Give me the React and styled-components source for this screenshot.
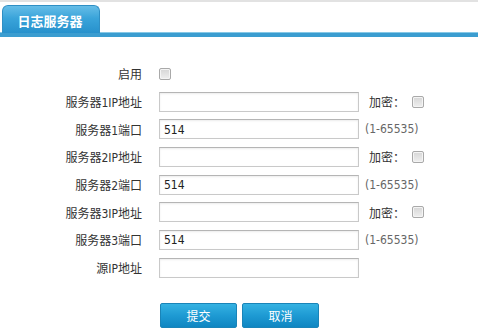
import React from 'react';
import styled, { createGlobalStyle } from 'styled-components';

const GlobalStyle = createGlobalStyle`
    body {
        margin: 0;
        background: #fff;
        font-family: "DejaVu Sans Condensed", "DejaVu Sans", "Noto Sans CJK SC", sans-serif;
        font-size: 12px;
        color: #333;
    }
`;

const Page = styled.div`
    width: 478px;
    height: 331px;
    overflow: hidden;
`;

const TabBar = styled.div`
    border-top: 2px solid #e2e2e2;
    height: 29px;
    padding: 2px 0 0 2px;
    display: flex;
    align-items: flex-end;
    border-bottom: 4px solid #3b9dd0;
    box-shadow: inset 0 -1px 0 #86c8e6;
`;

const Tab = styled.div`
    width: 98px;
    height: 28px;
    border-radius: 6px 6px 0 0;
    background: linear-gradient(to bottom, #66bde7 0%, #3aa4da 45%, #2791cc 100%);
    border: 1px solid #2f8fc4;
    border-bottom: none;
    box-sizing: border-box;
    color: #fff;
    font-family: "Noto Sans CJK SC", sans-serif;
    font-weight: bold;
    font-size: 13px;
    display: flex;
    align-items: center;
    justify-content: center;
    padding-top: 2px;
    padding-right: 2px;
`;

const Form = styled.div`
    display: grid;
    grid-template-columns: 142px 200px auto;
    grid-auto-rows: 27.7px;
    column-gap: 17px;
    padding-top: 23px;
    align-items: center;
`;

const Label = styled.div`
    text-align: right;
    white-space: nowrap;
    color: #333;
`;

const Field = styled.div`
    display: flex;
    align-items: center;
`;

const Input = styled.input`
    width: 200px;
    height: 20px;
    box-sizing: border-box;
    border: 1px solid #c9c9c9;
    border-top-color: #b5b5b5;
    box-shadow: inset 0 1px 2px rgba(0, 0, 0, 0.08);
    padding: 1px 4px 0;
    font-family: "DejaVu Sans Condensed", "DejaVu Sans", sans-serif;
    font-size: 12px;
    color: #222;
    outline: none;
`;

const Extra = styled.div`
    display: flex;
    align-items: center;
    gap: 7px;
    margin-left: ${p => p.$shift || 0}px;
    color: ${p => p.$muted ? '#666' : '#333'};
    white-space: nowrap;
`;

const Check = styled.span`
    display: inline-block;
    width: 12px;
    height: 12px;
    box-sizing: border-box;
    border: 1px solid #a9a9a9;
    border-radius: 2px;
    background: linear-gradient(to bottom, #d6d6d6, #efefef);
    box-shadow: inset 0 0 0 1px #f4f4f4;
`;

const Actions = styled.div`
    display: flex;
    gap: 5px;
    padding: 21px 0 0 160px;
`;

const Button = styled.button`
    width: 77px;
    height: 25px;
    border: 1px solid #1a84b8;
    border-radius: 2px;
    background: linear-gradient(to bottom, #35b2e2 0%, #1e9ad3 50%, #0f86c2 100%);
    color: #fff;
    font-family: "Noto Sans CJK SC", sans-serif;
    font-size: 12px;
    padding: 0;
`;

const rows = [
    { label: '服务器1IP地址', value: '', extra: 'enc' },
    { label: '服务器1端口', value: '514', extra: 'range' },
    { label: '服务器2IP地址', value: '', extra: 'enc' },
    { label: '服务器2端口', value: '514', extra: 'range' },
    { label: '服务器3IP地址', value: '', extra: 'enc' },
    { label: '服务器3端口', value: '514', extra: 'range' },
    { label: '源IP地址', value: '' },
];

export default function App() {
    return (
        <Page>
            <GlobalStyle />
            <TabBar>
                <Tab>日志服务器</Tab>
            </TabBar>
            <Form>
                <Label>启用</Label>
                <Field><Check /></Field>
                <div />
                {rows.map(r => (
                    <React.Fragment key={r.label}>
                        <Label>{r.label}</Label>
                        <Field><Input defaultValue={r.value} /></Field>
                        {r.extra === 'enc' && (
                            <Extra $shift={-7}>加密：<Check /></Extra>
                        )}
                        {r.extra === 'range' && (
                            <Extra $shift={-11} $muted>(1-65535)</Extra>
                        )}
                        {!r.extra && <div />}
                    </React.Fragment>
                ))}
            </Form>
            <Actions>
                <Button>提交</Button>
                <Button>取消</Button>
            </Actions>
        </Page>
    );
}
